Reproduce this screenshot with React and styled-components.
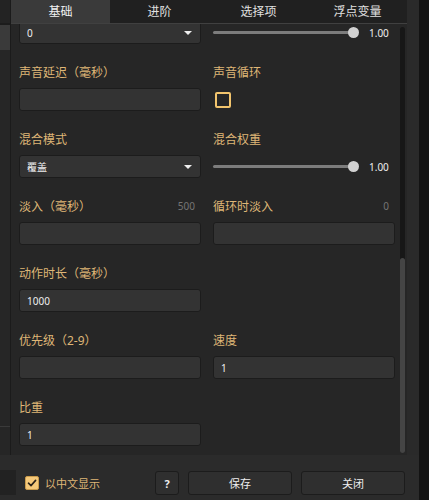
import React from "react";
import styled, { createGlobalStyle } from "styled-components";

const GlobalStyle = createGlobalStyle`
  html, body {
    margin: 0;
    padding: 0;
    background: #262626;
  }
  body {
    font-family: "Noto Sans", "Noto Sans CJK SC", sans-serif;
  }
`;

const GOLD = "#dfb677";

const Page = styled.div`
  width: 429px;
  height: 500px;
  display: flex;
  overflow: hidden;
  background: #262626;
`;

const MainCol = styled.div`
  width: 419px;
  display: flex;
  flex-direction: column;
`;

const Edge = styled.div`
  width: 10px;
  background: #131313;
`;

const Body = styled.div`
  height: 455px;
  display: flex;
`;

const SideList = styled.div`
  width: 11px;
  box-sizing: border-box;
  border-right: 1px solid #1b1b1b;
  display: flex;
  flex-direction: column;
`;

const SideHead = styled.div`
  height: 23px;
  background: #232323;
  border-bottom: 2px solid #1c1c1c;
`;

const SideItem = styled.div`
  height: ${(p) => p.h}px;
  background: ${(p) => (p.active ? "#3a3a3a" : "transparent")};
  border-top: ${(p) => (p.line ? "1px solid #3a3a3a" : "none")};
  flex: ${(p) => (p.grow ? 1 : "none")};
`;

const Dialog = styled.div`
  width: 396px;
  display: flex;
  flex-direction: column;
`;

const Tabs = styled.div`
  height: 24px;
  box-sizing: border-box;
  display: flex;
  background: #202020;
  border-bottom: 1px solid #404040;
`;

const Tab = styled.div`
  flex: 1;
  display: flex;
  align-items: center;
  justify-content: center;
  padding-bottom: 2px;
  font-size: 12px;
  color: ${(p) => (p.active ? "#f2f2f2" : "#e0e0e0")};
  background: ${(p) => (p.active ? "#3a3a3a" : "transparent")};
`;

const Content = styled.div`
  flex: 1;
  display: flex;
  overflow: hidden;
`;

const Form = styled.div`
  flex: 1;
  padding-left: 8px;
  overflow: hidden;
`;

const Grid = styled.div`
  margin-top: -27px;
  display: grid;
  grid-template-columns: 1fr 1fr;
  column-gap: 12px;
  row-gap: 20px;
`;

const Field = styled.div`
  display: flex;
  flex-direction: column;
  min-width: 0;
`;

const LabelRow = styled.div`
  height: 16px;
  margin-bottom: 8px;
  display: flex;
  align-items: center;
  justify-content: space-between;
`;

const Label = styled.span`
  font-size: 12px;
  color: ${GOLD};
  white-space: nowrap;
`;

const Hint = styled.span`
  font-size: 10px;
  color: #757575;
  padding-right: 6px;
`;

const TextInput = styled.input`
  box-sizing: border-box;
  width: 100%;
  height: 23px;
  margin: 0;
  padding: 0 7px;
  background: #333333;
  border: 1px solid #1c1c1c;
  border-radius: 3px;
  color: #eeeeee;
  font-family: "Noto Sans", "Noto Sans CJK SC", sans-serif;
  font-size: 10px;
  outline: none;
`;

const Select = styled.div`
  box-sizing: border-box;
  height: 23px;
  padding: 0 8px 0 7px;
  display: flex;
  align-items: center;
  justify-content: space-between;
  background: #333333;
  border: 1px solid #1c1c1c;
  border-radius: 3px;
  color: #eeeeee;
  font-size: 10px;
`;

const Caret = styled.span`
  width: 0;
  height: 0;
  border-left: 4px solid transparent;
  border-right: 4px solid transparent;
  border-top: 4px solid #eeeeee;
`;

const SliderRow = styled.div`
  height: 23px;
  display: flex;
  align-items: center;
  padding-right: 6px;
`;

const Track = styled.div`
  flex: 1;
  height: 3px;
  border-radius: 2px;
  background: #7c7c7c;
  position: relative;
`;

const Thumb = styled.span`
  position: absolute;
  right: -5px;
  top: -4px;
  width: 11px;
  height: 11px;
  border-radius: 50%;
  background: #d2d2d2;
`;

const SliderValue = styled.span`
  margin-left: 15px;
  width: 20px;
  font-size: 10px;
  color: #eeeeee;
`;

const CheckRow = styled.div`
  height: 23px;
  display: flex;
  align-items: center;
  padding-left: 2px;
`;

const CheckBox = styled.span`
  box-sizing: border-box;
  width: 16px;
  height: 16px;
  border: 2px solid #f2c46d;
  border-radius: 2px;
`;

const ScrollTrack = styled.div`
  width: 5px;
  height: 426px;
  margin: 3px 2px 0 5px;
  border-radius: 3px;
  background: #171717;
  display: flex;
  flex-direction: column;
  justify-content: flex-end;
`;

const ScrollThumb = styled.div`
  height: 195px;
  border-radius: 3px;
  background: #454545;
`;

const Gutter = styled.div`
  width: 12px;
  background: #2a2a2a;
`;

const Footer = styled.div`
  height: 45px;
  box-sizing: border-box;
  padding: 16px 14px 0 0;
  display: flex;
  align-items: flex-start;
  background: #2b2b2b;
`;

const FooterStub = styled.div`
  width: 16px;
  height: 25px;
  margin-top: -1px;
  background: #222222;
`;

const ZhToggle = styled.label`
  height: 24px;
  margin-left: 9px;
  display: flex;
  align-items: center;
  gap: 6px;
  font-size: 11px;
  color: ${GOLD};
`;

const FilledBox = styled.span`
  box-sizing: border-box;
  width: 14px;
  height: 14px;
  border-radius: 2px;
  background: #f5c97a;
  border: 1px solid #c99b4c;
  display: flex;
  align-items: center;
  justify-content: center;
`;

const Actions = styled.div`
  margin-left: auto;
  display: flex;
  gap: 9px;
`;

const Button = styled.button`
  box-sizing: border-box;
  width: ${(p) => (p.small ? 24 : 104)}px;
  height: 24px;
  margin: 0;
  padding: 0;
  background: #2f2f2f;
  border: 1px solid #1c1c1c;
  border-radius: 3px;
  color: #eeeeee;
  font-family: "Noto Sans", "Noto Sans CJK SC", sans-serif;
  font-size: 11px;
  font-weight: ${(p) => (p.small ? 700 : 400)};
`;

function TextField({ label, hint, value }) {
  return (
    <Field>
      <LabelRow>
        <Label>{label}</Label>
        {hint !== undefined && <Hint>{hint}</Hint>}
      </LabelRow>
      <TextInput readOnly value={value || ""} />
    </Field>
  );
}

function SelectField({ label, value }) {
  return (
    <Field>
      <LabelRow>
        <Label>{label}</Label>
      </LabelRow>
      <Select>
        <span>{value}</span>
        <Caret />
      </Select>
    </Field>
  );
}

function SliderField({ label, value }) {
  return (
    <Field>
      <LabelRow>
        <Label>{label}</Label>
      </LabelRow>
      <SliderRow>
        <Track>
          <Thumb />
        </Track>
        <SliderValue>{value}</SliderValue>
      </SliderRow>
    </Field>
  );
}

function CheckField({ label }) {
  return (
    <Field>
      <LabelRow>
        <Label>{label}</Label>
      </LabelRow>
      <CheckRow>
        <CheckBox />
      </CheckRow>
    </Field>
  );
}

const tabs = ["基础", "进阶", "选择项", "浮点变量"];

export default function App() {
  return (
    <Page>
      <GlobalStyle />
      <MainCol>
        <Body>
          <SideList>
            <SideHead />
            <SideItem h={25} active />
            <SideItem grow />
            <SideItem h={28} line />
          </SideList>
          <Dialog>
            <Tabs>
              {tabs.map((t, i) => (
                <Tab key={t} active={i === 0}>
                  {t}
                </Tab>
              ))}
            </Tabs>
            <Content>
              <Form>
                <Grid>
                  {/* first row is scrolled up under the tabs, its labels are out of view */}
                  <SelectField label="" value="0" />
                  <SliderField label="" value="1.00" />
                  <TextField label="声音延迟（毫秒）" />
                  <CheckField label="声音循环" />
                  <SelectField label="混合模式" value="覆盖" />
                  <SliderField label="混合权重" value="1.00" />
                  <TextField label="淡入（毫秒）" hint="500" />
                  <TextField label="循环时淡入" hint="0" />
                  <TextField label="动作时长（毫秒）" value="1000" />
                  <div />
                  <TextField label="优先级（2-9）" />
                  <TextField label="速度" value="1" />
                  <TextField label="比重" value="1" />
                </Grid>
              </Form>
              <ScrollTrack>
                <ScrollThumb />
              </ScrollTrack>
            </Content>
          </Dialog>
          <Gutter />
        </Body>
        <Footer>
          <FooterStub />
          <ZhToggle>
            <FilledBox>
              <svg width="10" height="10" viewBox="0 0 10 10">
                <path
                  d="M1.5 5.2 L4 7.6 L8.6 2.4"
                  fill="none"
                  stroke="#2a2218"
                  strokeWidth="1.6"
                  strokeLinecap="round"
                  strokeLinejoin="round"
                />
              </svg>
            </FilledBox>
            以中文显示
          </ZhToggle>
          <Actions>
            <Button small>?</Button>
            <Button>保存</Button>
            <Button>关闭</Button>
          </Actions>
        </Footer>
      </MainCol>
      <Edge />
    </Page>
  );
}
